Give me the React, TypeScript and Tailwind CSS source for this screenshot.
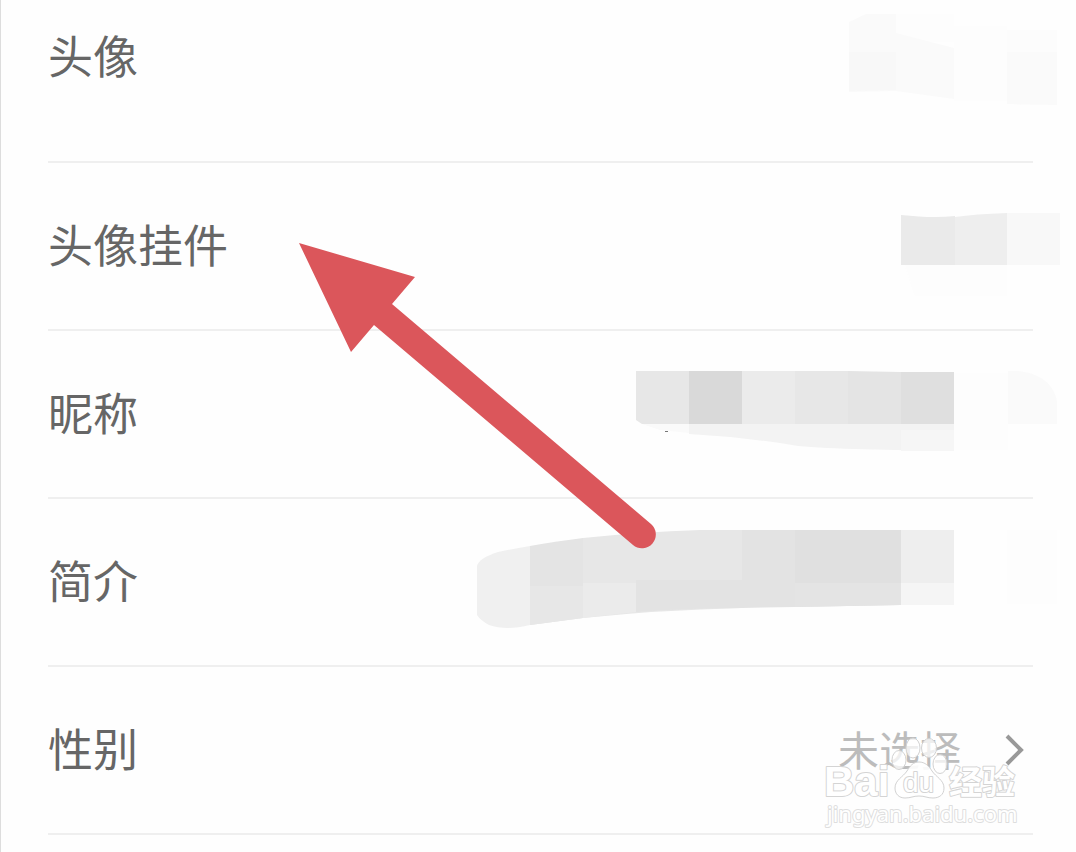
import type { ReactNode } from "react";

const labelClass = "text-[45px] leading-[62px] pb-1 text-[#666666]";
const smudgeClass = "w-[584px] shrink-0 -mr-[27px] pointer-events-none";

function AvatarSmudge() {
  return (
    <svg className={`${smudgeClass} h-[161px]`} viewBox="476 0 584 161" aria-hidden="true">
      <path d="M849 22 L866 14 H896 V91 L849 92Z" fill="#fafafa" />
      <path d="M849 52 H896 V90 L849 91Z" fill="#f8f8f8" />
      <path d="M896 14 H954 V42 H896Z" fill="#fdfdfd" />
      <path d="M896 33 L954 48 V99 L896 91Z" fill="#fafafa" />
      <path d="M954 26 H1007 V101 H954Z" fill="#fdfdfd" />
      <path d="M1007 30 H1057 V105 L1007 104Z" fill="#fcfcfc" />
      <path d="M1007 52 H1057 V105 L1007 104Z" fill="#fafafa" />
    </svg>
  );
}

function PendantSmudge() {
  return (
    <svg className={`${smudgeClass} h-[166px]`} viewBox="476 163 584 166" aria-hidden="true">
      <path d="M901 215 C921 217 938 218 955 216 V265 H901Z" fill="#eaeaea" />
      <path d="M955 217 Q975 214 1007 213 V265 H955Z" fill="#eeeeee" />
      <path d="M1007 213 H1060 V265 H1007Z" fill="#f8f8f8" />
      <path d="M905 265 H1007 V296 H915Z" fill="#fdfdfd" />
    </svg>
  );
}

function NicknameSmudge() {
  return (
    <svg className={`${smudgeClass} h-[166px]`} viewBox="476 331 584 166" aria-hidden="true">
      <path d="M642 424 H689 V433 L660 430Z" fill="#fafafa" />
      <path d="M689 424 H954 V451 C890 450 830 449 798 446 Q745 437 689 434Z" fill="#f3f3f3" />
      <path d="M901 430 H954 V451 H901Z" fill="#f6f6f6" />
      <path d="M636 371 H689 V424 H642 L636 420Z" fill="#e7e7e7" />
      <path d="M689 371 H742 V424 H689Z" fill="#d9d9d9" />
      <path d="M742 371 H795 V424 H742Z" fill="#ebebeb" />
      <path d="M795 371 H848 V424 H795Z" fill="#e7e7e7" />
      <path d="M848 371 L901 372 V424 H848Z" fill="#e4e4e4" />
      <path d="M901 372 H954 V424 H901Z" fill="#dfdfdf" />
      <path d="M954 373 H1008 V450 H954Z" fill="#fdfdfd" />
      <path d="M1008 371 C1036 370 1054 382 1057 402 V424 H1008Z" fill="#fafafa" />
      <path d="M665 431.5 H668" stroke="#777777" strokeWidth="1" />
    </svg>
  );
}

function BioSmudge() {
  return (
    <svg className={`${smudgeClass} h-[166px]`} viewBox="476 499 584 166" aria-hidden="true">
      <path d="M477 566 Q479 558 498 552 Q512 549 530 546 V625 Q506 631 489 625 Q480 620 477 615Z" fill="#f0f0f0" />
      <path d="M530 546 Q558 541 583 538 V618 L530 625Z" fill="#e4e4e4" />
      <path d="M530 586 H583 V618 L530 625Z" fill="#e7e7e7" />
      <path d="M583 538 Q640 532 700 530 H742 V608 Q660 610 583 618Z" fill="#e7e7e7" />
      <path d="M636 580 H742 V608 Q690 608 636 612Z" fill="#e3e3e3" />
      <path d="M583 583 H636 V612 L583 618Z" fill="#ebebeb" />
      <path d="M742 530 H795 V607 L742 608Z" fill="#e3e3e3" />
      <path d="M795 530 H901 V605 L795 607Z" fill="#e0e0e0" />
      <path d="M795 583 H901 V605 L795 607Z" fill="#e4e4e4" />
      <path d="M901 530 H954 V605 H901Z" fill="#eeeeee" />
      <path d="M901 583 H954 V605 H901Z" fill="#f5f5f5" />
      <path d="M1007 530 H1057 V604 H1007Z" fill="#fdfdfd" />
    </svg>
  );
}

function Arrow() {
  return (
    <svg
      className="absolute z-10 top-[72px] left-[242px] w-[380px] h-[320px] pointer-events-none"
      viewBox="290 235 380 320"
      aria-hidden="true"
    >
      <path
        d="M299 243 L415 277 L392 304 L651 524 A13.5 13.5 0 0 1 633 545 L374 325 L351 352Z"
        fill="#db565b"
      />
    </svg>
  );
}

function Watermark() {
  return (
    <svg
      className="absolute z-10 top-[63px] right-[3px] w-[220px] h-[100px] pointer-events-none"
      viewBox="810 730 220 100"
      aria-label="Baidu 经验"
    >
      <g fill="#ffffff" fillOpacity="0.75" stroke="#d2d2d2" strokeWidth="1">
        <ellipse cx="899" cy="760" rx="7" ry="9.5" />
        <ellipse cx="913" cy="748" rx="7" ry="10" />
        <ellipse cx="929" cy="748" rx="7.5" ry="9.5" />
        <ellipse cx="940" cy="764" rx="7" ry="9.5" />
      </g>
      <path
        d="M919 762 C925 762 929 766 932 771 C936 777 944 780 944 788 C944 795 939 798 933 798 C927 798 925 796 919 796 C913 796 911 798 905 798 C899 798 895 794 895 788 C895 780 903 777 907 771 C910 766 913 762 919 762Z"
        fill="#ffffff"
        fillOpacity="0.9"
        stroke="#d2d2d2"
        strokeWidth="1"
      />
      <g
        fill="#ffffff"
        stroke="#d4d4d4"
        strokeWidth="2"
        strokeLinejoin="round"
        paintOrder="stroke"
        fontFamily="'Liberation Sans', sans-serif"
        fontWeight="700"
      >
        <text x="824" y="796" fontSize="42">Bai</text>
        <text x="903" y="792" fontSize="28" fontWeight="400">du</text>
        <text x="949" y="794" fontSize="33" fontFamily="'Noto Sans CJK SC', sans-serif">经验</text>
        <text x="827" y="822" fontSize="22" fontWeight="400" stroke="#dedede" fontFamily="'Noto Sans', sans-serif">
          jingyan.baidu.com
        </text>
      </g>
    </svg>
  );
}

function Row({ label, children }: { label: string; children?: ReactNode }) {
  return (
    <li className="relative flex min-h-[168px] items-center justify-between border-b-2 border-[#efefef]">
      <span className={`${labelClass} shrink-0`}>{label}</span>
      {children}
    </li>
  );
}

function App() {
  return (
    <main className="min-h-screen overflow-hidden border-l border-[#dddddd] bg-[#fefefe] pl-[47px] pr-[43px] font-['Noto_Sans_CJK_SC',sans-serif]">
      <ul className="flex flex-col">
        <li className="flex items-start justify-between border-b-2 border-[#efefef]">
          <span className={`${labelClass} mt-6`}>头像</span>
          <AvatarSmudge />
        </li>
        <Row label="头像挂件">
          <PendantSmudge />
          <Arrow />
        </Row>
        <Row label="昵称">
          <NicknameSmudge />
        </Row>
        <Row label="简介">
          <BioSmudge />
        </Row>
        <Row label="性别">
          <button type="button" className="flex items-center gap-[43px] pr-[9px] text-[#bcbcbc]">
            <span className="pb-1 text-[41px] leading-[62px]">未选择</span>
            <svg className="w-5 h-8" viewBox="0 0 20 32" fill="none" stroke="#999999" strokeWidth="4" aria-hidden="true">
              <path d="M3 2 L17 16 L3 30" />
            </svg>
          </button>
          <Watermark />
        </Row>
      </ul>
    </main>
  );
}

export default App;
